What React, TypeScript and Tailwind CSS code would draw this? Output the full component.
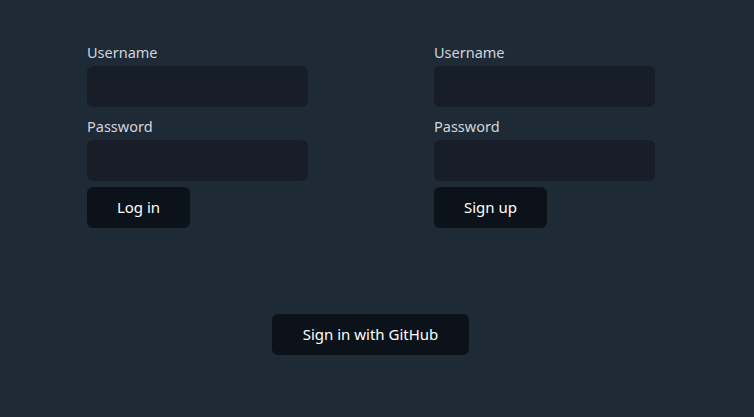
const font = { fontFamily: '"Noto Sans", "Open Sans", sans-serif' };

function Field({ label }: { label: string }) {
  return (
    <div className="flex flex-col">
      <label className="text-[14.5px] leading-5 text-[#d1d5db]">{label}</label>
      <input className="mt-1 h-[41px] w-full rounded-md bg-[#171e28] px-3 text-white outline-none" />
    </div>
  );
}

function Form({ action, width }: { action: string; width: string }) {
  return (
    <div className="flex w-[221px] flex-col">
      <Field label="Username" />
      <div className="mt-[9px]">
        <Field label="Password" />
      </div>
      <button className={`mt-[6px] h-[41px] rounded-md bg-[#0c1219] text-[15px] text-white ${width}`}>
        {action}
      </button>
    </div>
  );
}

export default function App() {
  return (
    <div className="min-h-[417px] w-full bg-[#1f2a37] pt-[42px]" style={font}>
      <div className="ml-[87px] flex gap-[126px]">
        <Form action="Log in" width="w-[103px]" />
        <Form action="Sign up" width="w-[113px]" />
      </div>
      <div className="ml-[272px] mt-[86px]">
        <button className="h-[41px] w-[197px] rounded-md bg-[#0c1219] text-[15px] text-white">
          Sign in with GitHub
        </button>
      </div>
    </div>
  );
}
